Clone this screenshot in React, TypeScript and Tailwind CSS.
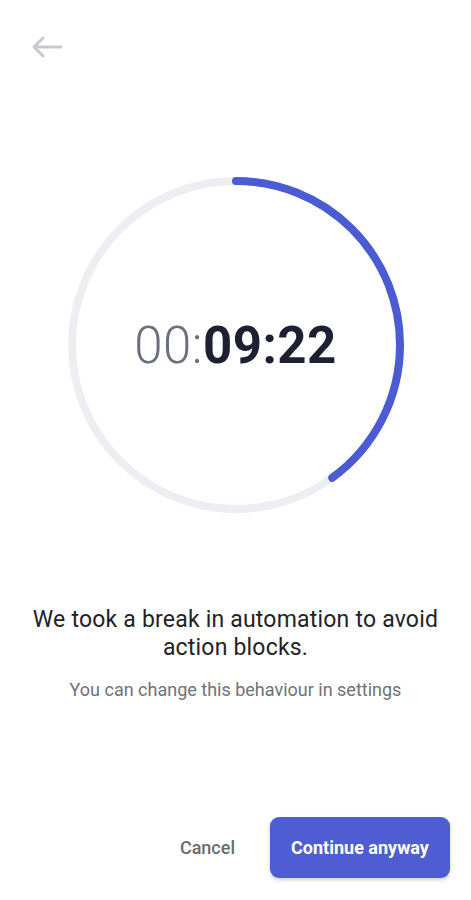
import React from "react";

export default function App() {
  const r = 164;
  const c = 2 * Math.PI * r;
  const progress = 0.4;
  return (
    <div className="w-[471px] h-[900px] bg-white flex flex-col" style={{ fontFamily: "Roboto, 'Noto Sans', sans-serif" }}>
      <div className="pt-[35px] pl-[31px] h-[177px]">
        <svg width="32" height="24" viewBox="0 0 32 24" fill="none">
          <path d="M30 12H3M12 3L3 12L12 21" stroke="#c6c9d0" strokeWidth="3" strokeLinecap="round" strokeLinejoin="round" />
        </svg>
      </div>
      <div className="flex justify-center">
        <div className="relative w-[336px] h-[336px]">
          <svg width="336" height="336" viewBox="0 0 336 336">
            <circle cx="168" cy="168" r={r} fill="none" stroke="#eceef1" strokeWidth="8" />
            <circle
              cx="168"
              cy="168"
              r={r}
              fill="none"
              stroke="#4a5bd3"
              strokeWidth="8"
              strokeLinecap="round"
              strokeDasharray={`${c * progress} ${c}`}
              transform="rotate(-90 168 168)"
            />
          </svg>
          <div className="absolute inset-0 flex items-center justify-center">
            <span className="text-[51px] leading-none tracking-[0.5px]">
              <span className="font-light text-[#6b7080]">00:</span>
              <span className="font-bold text-[#1d2030]">09:22</span>
            </span>
          </div>
        </div>
      </div>
      <div className="mt-[93px] text-center px-[20px]">
        <p className="text-[23px] leading-[28px] tracking-[0.2px] text-[#222326]">We took a break in automation to avoid action blocks.</p>
        <p className="mt-[16px] text-[18px] leading-[24px] text-[#707276]">You can change this behaviour in settings</p>
      </div>
      <div className="flex-1" />
      <div className="flex items-center justify-end pr-[21px] pb-[22px] gap-[35px]">
        <button className="text-[18px] font-medium text-[#6a6c70]">Cancel</button>
        <button className="w-[180px] h-[61px] rounded-[9px] bg-[#4f5dd2] text-white text-[18px] font-bold shadow-[0_2px_4px_rgba(0,0,0,0.2)]">
          Continue anyway
        </button>
      </div>
    </div>
  );
}
